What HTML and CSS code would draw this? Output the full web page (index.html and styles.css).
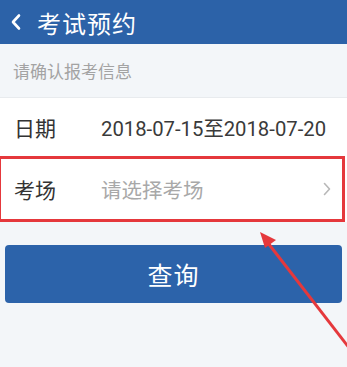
FILE: index.html
```html
<!DOCTYPE html>
<html lang="zh">
<head>
<meta charset="utf-8">
<link rel="stylesheet" href="styles.css">
</head>
<body>
<div class="page">
  <header class="topbar">
    <svg class="back" width="14" height="20" viewBox="0 0 14 20"><path d="M10 3.5 L4 10 L10 16.5" fill="none" stroke="#fff" stroke-width="2.6" stroke-linecap="round" stroke-linejoin="round"/></svg>
    <span class="title">考试预约</span>
  </header>
  <div class="hint">请确认报考信息</div>
  <div class="list">
    <div class="row row-date">
      <span class="label">日期</span>
      <span class="value">2018-07-15至2018-07-20</span>
    </div>
    <div class="row row-site">
      <span class="label">考场</span>
      <span class="value placeholder">请选择考场</span>
      <svg class="chev" width="8" height="14" viewBox="0 0 8 14"><path d="M1.5 1.5 L6.5 7 L1.5 12.5" fill="none" stroke="#b8b8b8" stroke-width="1.6" stroke-linecap="round" stroke-linejoin="round"/></svg>
      <div class="mark"></div>
    </div>
  </div>
  <div class="btn-wrap">
    <button class="btn">查询</button>
  </div>
  <svg class="arrow" width="347" height="367" viewBox="0 0 347 367">
    <line x1="268" y1="243" x2="350" y2="349" stroke="#e5383c" stroke-width="3"/>
    <polygon points="260,232 276,240 265,248" fill="#e5383c"/>
  </svg>
</div>
</body>
</html>
```
FILE: styles.css
```css
html, body {
  margin: 0;
  padding: 0;
}
body {
  background: #f3f6f9;
  font-family: Roboto, "Noto Sans CJK SC", sans-serif;
  width: 347px;
  height: 367px;
  overflow: hidden;
}
.page {
  position: relative;
  height: 367px;
}
.topbar {
  height: 44px;
  background: #2c62a8;
  display: flex;
  align-items: center;
  padding-left: 9px;
  box-sizing: border-box;
}
.back {
  display: block;
}
.title {
  color: #fff;
  font-size: 24px;
  margin-left: 14px;
  letter-spacing: 1px;
  font-family: "Noto Sans CJK SC", sans-serif;
}
.hint {
  height: 54px;
  display: flex;
  align-items: center;
  padding-left: 13px;
  font-size: 17px;
  color: #a3a3a3;
  font-family: "Noto Sans CJK SC", sans-serif;
  border-bottom: 1px solid #e8ebee;
  box-sizing: border-box;
}
.list {
  background: #fff;
}
.row {
  position: relative;
  display: flex;
  align-items: center;
  padding-left: 14px;
  padding-right: 16px;
}
.row-date {
  height: 58px;
}
.row-site {
  height: 66px;
}
.label {
  width: 87px;
  font-size: 21px;
  color: #333;
  font-family: "Noto Sans CJK SC", sans-serif;
}
.value {
  font-size: 20.3px;
  color: #3a3a3a;
  flex: 1;
}
.placeholder {
  color: #a8a8a8;
  font-family: "Noto Sans CJK SC", sans-serif;
  font-size: 20.5px;
}
.chev {
  display: block;
}
.mark {
  position: absolute;
  left: -2px;
  right: 2px;
  top: 0;
  height: 66px;
  border: 3px solid #e5383c;
  box-sizing: border-box;
}
.btn-wrap {
  padding: 23px 5px 0;
}
.btn {
  display: block;
  width: 100%;
  height: 58px;
  border: none;
  border-radius: 4px;
  background: #2c63aa;
  color: #fff;
  font-size: 25px;
  font-family: "Noto Sans CJK SC", sans-serif;
  letter-spacing: 1px;
}
.arrow {
  position: absolute;
  left: 0;
  top: 0;
  pointer-events: none;
}
```
